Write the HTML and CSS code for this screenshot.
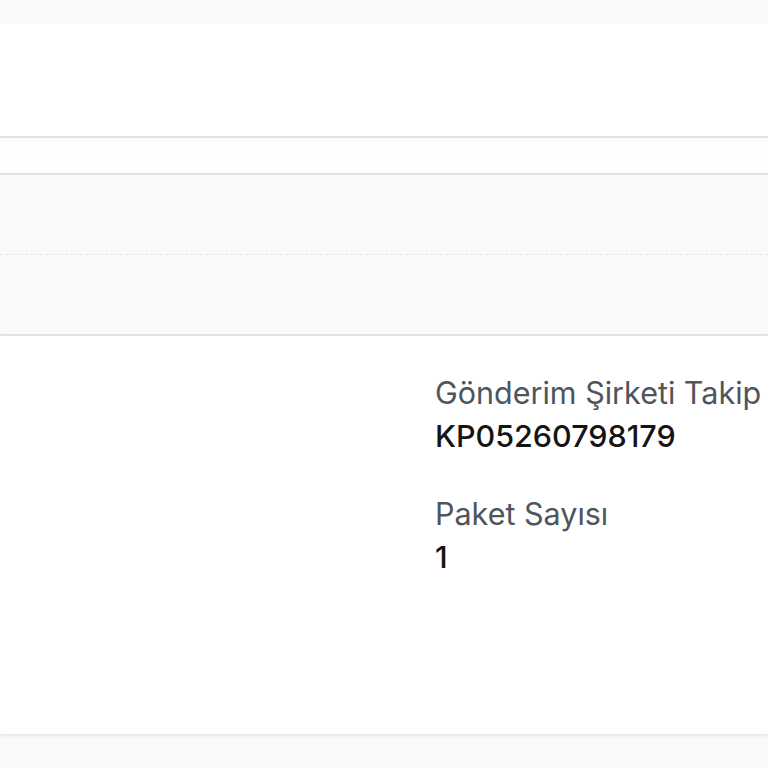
FILE: index.html
```html
<!DOCTYPE html>
<html lang="tr">
<head>
<meta charset="utf-8">
<link rel="stylesheet" href="styles.css">
</head>
<body>
<div class="topbar"></div>
<div class="header"></div>
<div class="subbar"></div>
<div class="section">
  <div class="row row-first"></div>
  <div class="row"></div>
</div>
<div class="content">
  <div class="spacer"></div>
  <div class="fields">
    <div class="field">
      <div class="label">Gönderim Şirketi Takip</div>
      <div class="value">KP05260798179</div>
    </div>
    <div class="field">
      <div class="label">Paket Sayısı</div>
      <div class="value">1</div>
    </div>
  </div>
</div>
<div class="footer"></div>
</body>
</html>
```
FILE: styles.css
```css
html, body {
  margin: 0;
  padding: 0;
  background: #f9f9f9;
  font-family: Inter, "Noto Sans", sans-serif;
  overflow: hidden;
}
.topbar {
  height: 24px;
  background: #f9f9f9;
}
.header {
  height: 112px;
  background: #ffffff;
  border-bottom: 2px solid #e3e3e3;
}
.subbar {
  height: 35px;
  background: #fdfdfd;
  border-bottom: 2px solid #e3e3e3;
}
.section {
  background: #f9f9f9;
  border-bottom: 2px solid #e3e3e3;
}
.row {
  height: 79px;
}
.row-first {
  border-bottom: 1px dashed #e6e6e6;
}
.content {
  height: 398px;
  background: #ffffff;
  display: flex;
  box-shadow: 0 2px 3px rgba(0,0,0,0.08);
  position: relative;
}
.spacer {
  width: 435px;
  flex: none;
}
.fields {
  padding-top: 35px;
  display: flex;
  flex-direction: column;
  gap: 35px;
  white-space: nowrap;
}
.field {
  display: flex;
  flex-direction: column;
}
.label {
  font-size: 30.5px;
  line-height: 43px;
  color: #50555b;
  font-weight: 400;
}
.value {
  font-size: 30.5px;
  line-height: 43px;
  color: #141414;
  font-weight: 550;
}
.footer {
  height: 40px;
  background: #f9f9f9;
}
```
